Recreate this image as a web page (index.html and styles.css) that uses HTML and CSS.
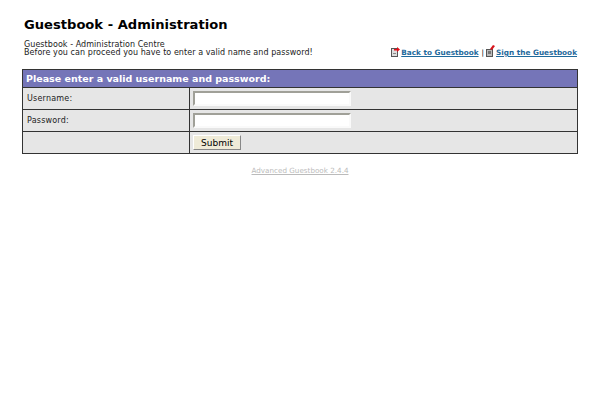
FILE: index.html
```html
<!DOCTYPE html>
<html lang="en">
<head>
  <meta charset="utf-8" />
  <title>Guestbook - Administration</title>
  <link rel="stylesheet" href="styles.css">
</head>
<body>
  <div class="app">
    <h1>Guestbook - Administration</h1>
    <div class="intro">
      <div class="intro-text">
        Guestbook - Administration Centre<br>
        Before you can proceed you have to enter a valid name and password!
      </div>
      <div class="links">
        <svg class="icon" width="9" height="10" viewBox="0 0 9 10">
          <rect x="0.5" y="1.5" width="6" height="8" fill="#ddd" stroke="#555"/>
          <rect x="2" y="6" width="3" height="1" fill="#888"/>
          <path d="M3 2h3V0l3 2.5L6 5V3.500H3z" fill="#e0101a"/>
        </svg>
        <a href="#">Back to Guestbook</a>
        <span class="sep">|</span>
        <svg class="icon" width="9" height="12" viewBox="0 0 9 12">
          <rect x="0.5" y="4.500" width="6" height="7" fill="#bbb" stroke="#555"/>
          <rect x="2" y="6" width="3" height="3" fill="#777"/>
          <path d="M4 4L7 0l2 1-3 4z" fill="#d8141c"/>
        </svg>
        <a href="#">Sign the Guestbook</a>
      </div>
    </div>

    <form>
      <table class="login">
        <tr><th colspan="2">Please enter a valid username and password:</th></tr>
        <tr>
          <td class="label">Username:</td>
          <td><input type="text" class="field"></td>
        </tr>
        <tr>
          <td class="label">Password:</td>
          <td><input type="password" class="field"></td>
        </tr>
        <tr>
          <td class="label"></td>
          <td><button type="button" class="btn">Submit</button></td>
        </tr>
      </table>
    </form>

    <div class="credit"><a href="#">Advanced Guestbook 2.4.4</a></div>
  </div>
</body>
</html>
```

FILE: styles.css
```css
html, body { height: 100%; }
body{
  margin: 0;
  background: #fff;
  color: #000;
  font-family: "DejaVu Sans", Verdana, sans-serif;
  font-size: 8px;
}
.app{ padding: 17px 22px 0; }
h1{
  margin: 0 0 0 2px;
  font-size: 13.1px;
  line-height: 16px;
  font-weight: 700;
}
.intro{
  display: flex;
  justify-content: space-between;
  align-items: flex-end;
  margin: 8px 1px 12px 2px;
}
.intro-text{ line-height: 8px; letter-spacing: .06px; color: #222; }
.links{
  display: flex;
  align-items: flex-end;
  gap: 1px;
  font-size: 7.3px;
  line-height: 9px;
  font-weight: 700;
}
.links a{ color: #1f6a9c; }
.sep{ margin: 0 1px 0 2px; font-weight: 400; }

.login{
  width: 556px;
  border-collapse: collapse;
  border: 1px solid #333;
}
.login th{
  height: 17px;
  padding: 0 3px;
  background: #7575b8;
  color: #fff;
  font-size: 9.5px;
  font-weight: 700;
  text-align: left;
  border: 1px solid #333;
}
.login td{
  height: 21px;
  padding: 0 3px;
  background: #e6e6e6;
  border: 1px solid #333;
}
.login td.label{ width: 159px; padding-left: 4px; letter-spacing: .2px; color: #222; }
.field{
  display: block;
  box-sizing: border-box;
  width: 158px;
  height: 15px;
  padding: 0;
  background: #fff;
  border: 2px solid;
  border-color: #a0a098 #fafafa #fafafa #a0a098;
}
.btn{
  display: block;
  box-sizing: border-box;
  width: 48px;
  height: 15px;
  padding: 0;
  background: #efebd8;
  border: 1px solid;
  border-color: #fff #888 #888 #fff;
  color: #000;
  font-family: inherit;
  font-size: 9px;
}
.credit{
  margin-top: 12px;
  text-align: center;
  font-size: 7.2px;
}
.credit a{ color: #bbb; }
```
